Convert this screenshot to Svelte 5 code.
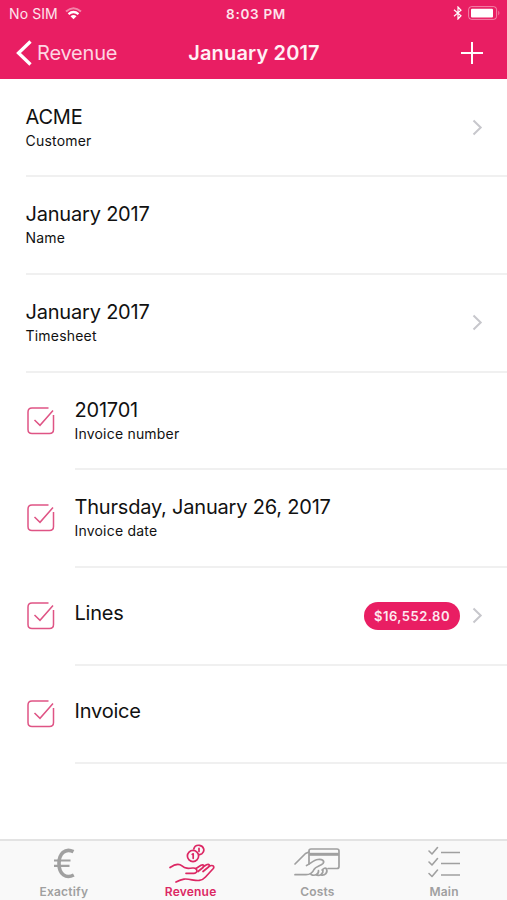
<script>
  const rows = [
    { title: 'ACME', sub: 'Customer', arrow: true },
    { title: 'January 2017', sub: 'Name' },
    { title: 'January 2017', sub: 'Timesheet', arrow: true },
    { title: '201701', sub: 'Invoice number', check: true },
    { title: 'Thursday, January 26, 2017', sub: 'Invoice date', check: true },
    { title: 'Lines', check: true, badge: '$16,552.80', arrow: true },
    { title: 'Invoice', check: true }
  ]

  const tabs = ['Exactify', 'Revenue', 'Costs', 'Main']
  let active = $state('Revenue')
</script>

<main>
  <header>
    <div class="status">
      <div class="carrier">
        <span>No SIM</span>
        <svg width="17" height="13" viewBox="0 0 17 13" fill="none" stroke="#fff" stroke-width="2">
          <path d="M1 4.500Q8.500-2 16 4.500" opacity=".45" />
          <path d="M3.500 7.200Q8.500 2.900 13.500 7.200" stroke-width="2.300" />
          <path d="M5.500 9.200Q8.500 6.800 11.500 9.200L8.500 12.200Z" fill="#fff" stroke="none" />
        </svg>
      </div>
      <span class="time">8:03 PM</span>
      <div class="power">
        <svg width="10" height="14" viewBox="0 0 10 14" fill="none" stroke="#fff" stroke-width="1.200">
          <path d="M1 3.800L8 9.700L5 13V1L8 4.300L1 10.200" />
        </svg>
        <svg width="33" height="14" viewBox="0 0 33 14">
          <rect x=".6" y=".6" width="28" height="12.800" rx="3" fill="none" stroke="#fff" opacity=".45" />
          <rect x="3" y="2.800" width="22" height="8.600" rx="1" fill="#fff" />
          <path d="M30.300 4.500Q32.500 7 30.300 9.500Z" fill="#fff" opacity=".45" />
        </svg>
      </div>
    </div>
    <nav>
      <button type="button" class="back">
        <svg width="16" height="26" viewBox="0 0 16 26" fill="none" stroke="#fff" stroke-width="3.300">
          <path d="M14.500 1.500L2.500 13L14.500 24.500" />
        </svg>
        <span>Revenue</span>
      </button>
      <h1>January 2017</h1>
      <button type="button" class="add" aria-label="Add">
        <svg width="22" height="22" viewBox="0 0 22 22" stroke="#fff" stroke-width="2">
          <path d="M0 11H22M11 0V22" />
        </svg>
      </button>
    </nav>
  </header>

  <ul>
    {#each rows as row}
      <li>
        {#if row.check}
          <svg class="check" width="30" height="30" viewBox="0 0 30 30" fill="none" stroke="#df5485" stroke-width="1.500">
            <path d="M22.500 2H6Q2 2 2 6V23.500Q2 27.500 6 27.500H23.500Q27.500 27.500 27.500 23.500V9" />
            <path d="M8.500 14L14 19.300L27 4.500" />
          </svg>
        {/if}
        <div class="cell">
          <div class="text" class:single={!row.sub}>
            <span class="title">{row.title}</span>
            {#if row.sub}<span class="sub">{row.sub}</span>{/if}
          </div>
          {#if row.badge}<span class="badge">{row.badge}</span>{/if}
          {#if row.arrow}
            <svg class="arrow" width="11" height="17" viewBox="0 0 11 17" fill="none" stroke="#c7c7cc" stroke-width="2">
              <path d="M1.500 1.500L8.700 8.500L1.500 15.500" />
            </svg>
          {/if}
        </div>
      </li>
    {/each}
  </ul>

  <footer>
    {#each tabs as tab}
      <button type="button" class="tab" class:active={active === tab} onclick={() => (active = tab)}>
        <svg width="50" height="40" viewBox="0 0 50 40" fill="none" stroke="currentColor" stroke-width="1.700" stroke-linecap="round" stroke-linejoin="round">
          {#if tab === 'Exactify'}
            <g stroke-width="3.600" stroke-linecap="butt">
              <path d="M34.500 7.700C26 3.500 20 10 20 19.500C20 30.500 27 35 34.800 31" />
              <path d="M15 16.500H31.500M15 21.800H30.500" stroke-width="2.200" />
            </g>
          {:else if tab === 'Revenue'}
            <path d="M4 23.500C9 20 13 19.300 16 21.800C19.500 24.800 22 24.500 27 24C31.500 23.700 32.500 29 28 29.300H20" />
            <path d="M30 24.500L35 21.300C37.500 20 39 22 37 23.500L32 27.500M37 23L40.500 20.800C43 19.500 44.500 21.500 42.500 23L37 27.500M43 22.700C46 20.300 49 22 47.300 24.500L39.500 33C35.500 37.500 31.500 36.800 26 35.800C19.500 34.500 16.500 34.500 10 38" />
            <circle cx="27" cy="12" r="5.600" />
            <path d="M27.800 5C28.500 2 31 1 33.500 1.300C38 2 39.200 7 36 9.700Q35 10.500 33.500 10.700" />
            <path d="M27.200 9.800V14.300M26.200 10.400L27.200 9.800M33 4.300V7.500" />
          {:else if tab === 'Costs'}
            <path d="M3 20L13.500 9.500L17 8" />
            <path d="M17 20V7Q17 5 19 5H45Q47 5 47 7V22.500Q47 24.500 45 24.500H36" />
            <path d="M17 10.300H47" stroke-width="3" stroke-linecap="butt" />
            <path d="M14.500 21.500C18 20 21.500 16 26 15.500C30 15 33 16.500 31 19.500C29 22 23.500 22.500 22 25.500C20.500 29 18 30.700 14 30.700H3" />
            <path d="M19 30.500C23 32.500 27 30 26.500 26.500M24 31C28 32.500 31.500 29.500 31 26M29 31C33 32 36 28.500 34.500 25C33.500 23 31.500 24.500 30 26" />
          {:else}
            <g stroke-width="1.600">
              <path d="M10 7L13 10L18.500 3.500M10 18L13 21L18.500 14.500M10 29.500L13 32.500L18.500 26" />
              <path d="M22 8.500H41M22 19.500H41M22 31H41" stroke-linecap="butt" />
            </g>
          {/if}
        </svg>
        <span>{tab}</span>
      </button>
    {/each}
  </footer>
</main>

<style>
  :global(body) {
    background: #fff;
  }

  * {
    box-sizing: border-box;
  }

  main {
    height: 900px;
    display: flex;
    flex-direction: column;
    font-family: Inter, 'Liberation Sans', sans-serif;
    color: #111;
    overflow: hidden;
  }

  svg {
    display: block;
    flex: none;
  }

  button {
    border: none;
    background: none;
    padding: 0;
    font: inherit;
    color: inherit;
  }

  header {
    height: 79px;
    flex: none;
    background: #e91e63;
    color: #fff;
  }

  .status,
  nav {
    display: grid;
    grid-template-columns: 1fr auto 1fr;
    align-items: center;
  }
  .status {
    height: 28px;
    padding: 0 6px 2px 9px;
    font-size: 14px;
    color: #fde4ec;
  }
  .carrier {
    display: flex;
    align-items: center;
    gap: 7px;
    letter-spacing: 0.1px;
  }
  .time {
    padding: 1px 0 0 2px;
    font-weight: 600;
    font-size: 13.5px;
    letter-spacing: 0.7px;
  }
  .power {
    display: flex;
    justify-content: flex-end;
    gap: 5px;
  }

  nav {
    height: 49px;
    padding: 0 24px 0 16px;
  }
  .back {
    display: flex;
    align-items: center;
    gap: 5px;
    font-size: 20px;
    letter-spacing: -0.2px;
    color: #fdd5e2;
  }
  h1 {
    margin: 0 0 0 9px;
    font-size: 20px;
    font-weight: 600;
    letter-spacing: 0.15px;
    color: #fff0f5;
  }
  .add {
    justify-self: end;
  }

  ul {
    flex: 1;
    margin: 0;
    padding: 0.7px 0 0 25.5px;
    list-style: none;
  }
  li {
    height: 97.7px;
    display: flex;
    align-items: center;
  }
  .check {
    margin-right: 19px;
    margin-bottom: 2px;
  }
  .cell {
    flex: 1;
    height: 100%;
    display: flex;
    align-items: center;
    padding-right: 24px;
    border-bottom: 2px solid #f0f0f0;
  }
  .text {
    flex: 1;
    display: flex;
    flex-direction: column;
  }
  .single {
    padding-bottom: 5px;
  }
  .title {
    font-size: 20px;
    line-height: 26px;
    letter-spacing: -0.2px;
  }
  .sub {
    font-size: 14px;
    line-height: 22px;
    letter-spacing: 0.2px;
  }
  .badge {
    height: 28px;
    padding: 0 10px;
    margin-right: 12px;
    border-radius: 14px;
    background: #e91e63;
    color: #fde9f0;
    font-size: 13px;
    font-weight: 600;
    letter-spacing: 0.5px;
    line-height: 28px;
  }

  footer {
    height: 61px;
    flex: none;
    display: grid;
    grid-template-columns: repeat(4, 1fr);
    background: #f9f9f9;
    border-top: 2px solid #e3e3e3;
  }
  .tab {
    display: flex;
    flex-direction: column;
    align-items: center;
    padding: 3px 0 0 1px;
    color: #a0a0a0;
    font-size: 12px;
    font-weight: 600;
    line-height: 16px;
    letter-spacing: 0.2px;
  }
  .active {
    color: #dc2864;
  }
</style>
